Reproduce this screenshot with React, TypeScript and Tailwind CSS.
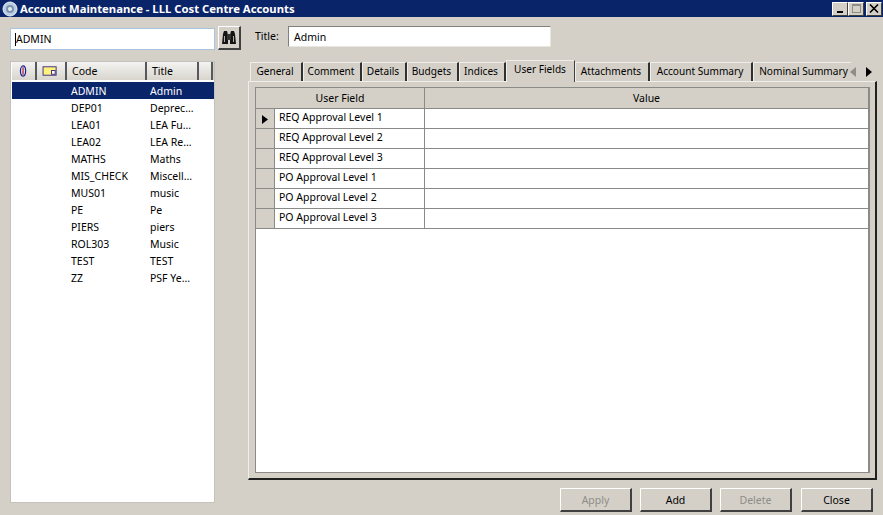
const codes = [
  ['ADMIN', 'Admin'],
  ['DEP01', 'Deprec...'],
  ['LEA01', 'LEA Fu...'],
  ['LEA02', 'LEA Re...'],
  ['MATHS', 'Maths'],
  ['MIS_CHECK', 'Miscell...'],
  ['MUS01', 'music'],
  ['PE', 'Pe'],
  ['PIERS', 'piers'],
  ['ROL303', 'Music'],
  ['TEST', 'TEST'],
  ['ZZ', 'PSF Ye...'],
]

const tabs = [
  { label: 'General', w: 'w-[53px]' },
  { label: 'Comment', w: 'w-[59px]' },
  { label: 'Details', w: 'w-[45px]' },
  { label: 'Budgets', w: 'w-[52px]' },
  { label: 'Indices', w: 'w-[47px]' },
  { label: 'User Fields', w: 'w-[69px]', active: true },
  { label: 'Attachments', w: 'w-[75px]' },
  { label: 'Account Summary', w: 'w-[103px]' },
  { label: 'Nominal Summary', w: 'w-[98px]', last: true },
]

const fields = [
  'REQ Approval Level 1',
  'REQ Approval Level 2',
  'REQ Approval Level 3',
  'PO Approval Level 1',
  'PO Approval Level 2',
  'PO Approval Level 3',
]

const raised = 'border border-t-white border-l-white border-r-[#404040] border-b-[#404040]'

function HeaderCell({ w, children }: { w: string; children?: React.ReactNode }) {
  return (
    <div className={`${w} h-[18px] flex items-center shrink-0 bg-gradient-to-b from-[#f4f3f0] to-[#d8d5ce] border-r-2 border-r-[#55585c]`}>
      {children}
    </div>
  )
}

function WinButton({ label, disabled, w }: { label: string; disabled?: boolean; w: string }) {
  return (
    <button className={`${w} h-[24px] pt-[1px] bg-[#d4d0c8] ${raised} border-r-2 border-b-2 text-center ${disabled ? 'text-[#8f8d88]' : 'text-black'}`}>
      {label}
    </button>
  )
}

export default function App() {
  return (
    <div className="w-[883px] h-[515px] overflow-hidden flex flex-col bg-[#d4d0c8] text-[10.5px] leading-[13px] text-black font-['Noto_Sans',sans-serif]">
      {/* title bar */}
      <div className="h-[17px] bg-[#0a246a] flex items-center text-white shrink-0">
        <svg width="16" height="16" viewBox="0 0 16 16" className="ml-[2px] mr-[2px]">
          <circle cx="8" cy="8" r="7" fill="#b9cfe6" stroke="#e8eef5" />
          <circle cx="8" cy="8" r="4" fill="#7d93ad" />
          <circle cx="8" cy="8" r="2" fill="#e6ebf2" />
        </svg>
        <span className="font-bold text-[11.3px] whitespace-nowrap">
          Account Maintenance - LLL Cost Centre Accounts
        </span>
        <div className="ml-auto flex mr-[1px]">
          <div className={`w-[16px] h-[14px] bg-[#d4d0c8] ${raised} flex items-end justify-center pb-[2px]`}>
            <div className="w-[6px] h-[2px] bg-black" />
          </div>
          <div className={`w-[16px] h-[14px] bg-[#d4d0c8] ${raised} flex items-center justify-center`}>
            <div className="w-[9px] h-[9px] border border-t-2 border-[#8f8d88]" />
          </div>
          <div className={`w-[16px] h-[14px] ml-[2px] bg-[#d4d0c8] ${raised} flex items-center justify-center`}>
            <svg width="10" height="9" viewBox="0 0 10 9">
              <path d="M1 0.5 L9 8.5 M9 0.5 L1 8.5" stroke="black" strokeWidth="1.6" />
            </svg>
          </div>
        </div>
      </div>

      <div className="flex flex-1 min-h-0">
        {/* left side: search and code list */}
        <div className="w-[248px] shrink-0 pl-[10px] pt-[9px]">
          <div className="flex items-end">
            <div className="w-[205px] h-[22px] bg-white border border-[#a9c4e0] flex items-center pl-[4px]">
              <span className="border-l border-black pl-[0.5px] -ml-[0.5px]">ADMIN</span>
            </div>
            <div className={`w-[23px] h-[24px] ml-[3px] ${raised} border-r-2 border-b-2 flex items-center justify-center`}>
              <svg width="16" height="15" viewBox="0 0 16 15">
                <path d="M1 14 L2 4 L3 1 H6 L7 5 V14 Z M9 14 V5 L10 1 H13 L14 4 L15 14 Z" fill="#141414" />
                <rect x="6" y="4" width="4" height="6" fill="#333" />
                <path d="M3.5 6 V12 M12.5 6 V12" stroke="#b0aea8" />
              </svg>
            </div>
          </div>

          <div className="mt-[11px] w-[205px] h-[442px] bg-white border border-[#c4c2bd]">
            <div className="flex h-[18px] bg-[#d4d0c8] ml-[1px]">
              <HeaderCell w="w-[25px]">
                <svg width="25" height="14" viewBox="0 0 25 14">
                  <ellipse cx="12" cy="7" rx="2.8" ry="5.5" fill="none" stroke="#1a1a90" strokeWidth="1.3" />
                  <path d="M12 3 V11" stroke="#a01030" strokeWidth="1.2" />
                </svg>
              </HeaderCell>
              <HeaderCell w="w-[30px]">
                <svg width="30" height="14" viewBox="0 0 30 14">
                  <rect x="6.5" y="2.5" width="14" height="9" fill="#fff27a" stroke="#3a2a80" />
                  <rect x="15.5" y="6.5" width="4" height="4" fill="#fff" stroke="#3a2a80" />
                </svg>
              </HeaderCell>
              <HeaderCell w="w-[80px]"><span className="pl-[5px] pt-[1px]">Code</span></HeaderCell>
              <HeaderCell w="w-[52px]"><span className="pl-[5px] pt-[1px]">Title</span></HeaderCell>
              <HeaderCell w="w-[14px]" />
            </div>
            <div className="mt-[2px]">
              {codes.map(([code, title], i) => (
                <div key={code} className={`h-[17px] pt-[1px] flex items-center ml-[1px] ${i === 0 ? 'bg-[#0a246a] text-white' : ''}`}>
                  <span className="w-[59px] shrink-0" />
                  <span className="w-[79px] shrink-0">{code}</span>
                  <span className="whitespace-nowrap">{title}</span>
                </div>
              ))}
            </div>
          </div>
        </div>

        {/* right side: title, tabs, buttons */}
        <div className="flex-1 min-w-0 flex flex-col pt-[9px]">
          <div className="flex items-center h-[21px]">
            <span className="ml-[7px] w-[33px]">Title:</span>
            <div className="w-[263px] h-[21px] pt-[1px] bg-white border border-t-[#808080] border-l-[#808080] border-r-[#e8e6e1] border-b-[#e8e6e1] flex items-center pl-[5px]">
              Admin
            </div>
          </div>

          {/* tab strip */}
          <div className="flex items-end h-[22px] mt-[12px] pl-[2px] relative z-10 text-[10.1px]">
            {tabs.map(t => (
              <div
                key={t.label}
                className={`${t.w} shrink-0 flex items-center justify-center border-l border-t border-t-[#f0eee9] border-l-[#f0eee9] whitespace-nowrap ${
                  t.active
                    ? 'h-[22px] -mb-[1px] bg-[#d4d0c8] border-r border-r-[#404040] pb-[5px] pr-[1px]'
                    : t.last
                      ? 'h-[19px] pb-[2px] pl-[2px]'
                      : 'h-[19px] pb-[2px] pr-[2px] border-r-2 border-r-[#303030]'
                }`}
              >
                {t.label}
              </div>
            ))}
            <div className="flex items-center gap-[10px] -ml-[1px] h-[19px]">
              <svg width="6" height="10" viewBox="0 0 6 10"><path d="M6 0 V10 L0 5 Z" fill="#8f8d88" /></svg>
              <svg width="6" height="10" viewBox="0 0 6 10"><path d="M0 0 V10 L6 5 Z" fill="black" /></svg>
            </div>
          </div>

          {/* tab panel */}
          <div className="w-[629px] h-[399px] border border-t-[#f0eee9] border-l-[#f0eee9] border-r-2 border-b-2 border-r-[#202020] border-b-[#202020] pt-[5px] pl-[6px]">
            <div className="w-[615px] h-[386px] bg-white border border-r-2 border-[#8a8a86]">
              <div className="flex h-[21px] bg-[#d4d0c8] border-b border-[#8a8a86]">
                <div className="w-[169px] shrink-0 flex items-center justify-center border-r border-[#8a8a86]">User Field</div>
                <div className="flex-1 flex items-center justify-center">Value</div>
              </div>
              {fields.map((f, i) => (
                <div key={f} className="flex h-[20px] border-b border-[#8a8a86]">
                  <div className="w-[19px] shrink-0 bg-[#d4d0c8] border-r border-[#8a8a86] flex items-center justify-center">
                    {i === 0 && (
                      <svg width="6" height="9" viewBox="0 0 6 9" className="mt-[2px]"><path d="M0 0 V9 L6 4.5 Z" fill="black" /></svg>
                    )}
                  </div>
                  <div className="w-[150px] shrink-0 border-r border-[#8a8a86] pl-[4px] pb-[3px] flex items-center">{f}</div>
                  <div className="flex-1" />
                </div>
              ))}
            </div>
          </div>

          {/* footer buttons */}
          <div className="flex mt-[8px] pl-[312px]">
            <WinButton label="Apply" disabled w="w-[72px]" />
            <div className="ml-[8px]"><WinButton label="Add" w="w-[72px]" /></div>
            <div className="ml-[8px]"><WinButton label="Delete" disabled w="w-[72px]" /></div>
            <div className="ml-[9px]"><WinButton label="Close" w="w-[72px]" /></div>
          </div>
        </div>
      </div>
    </div>
  )
}
